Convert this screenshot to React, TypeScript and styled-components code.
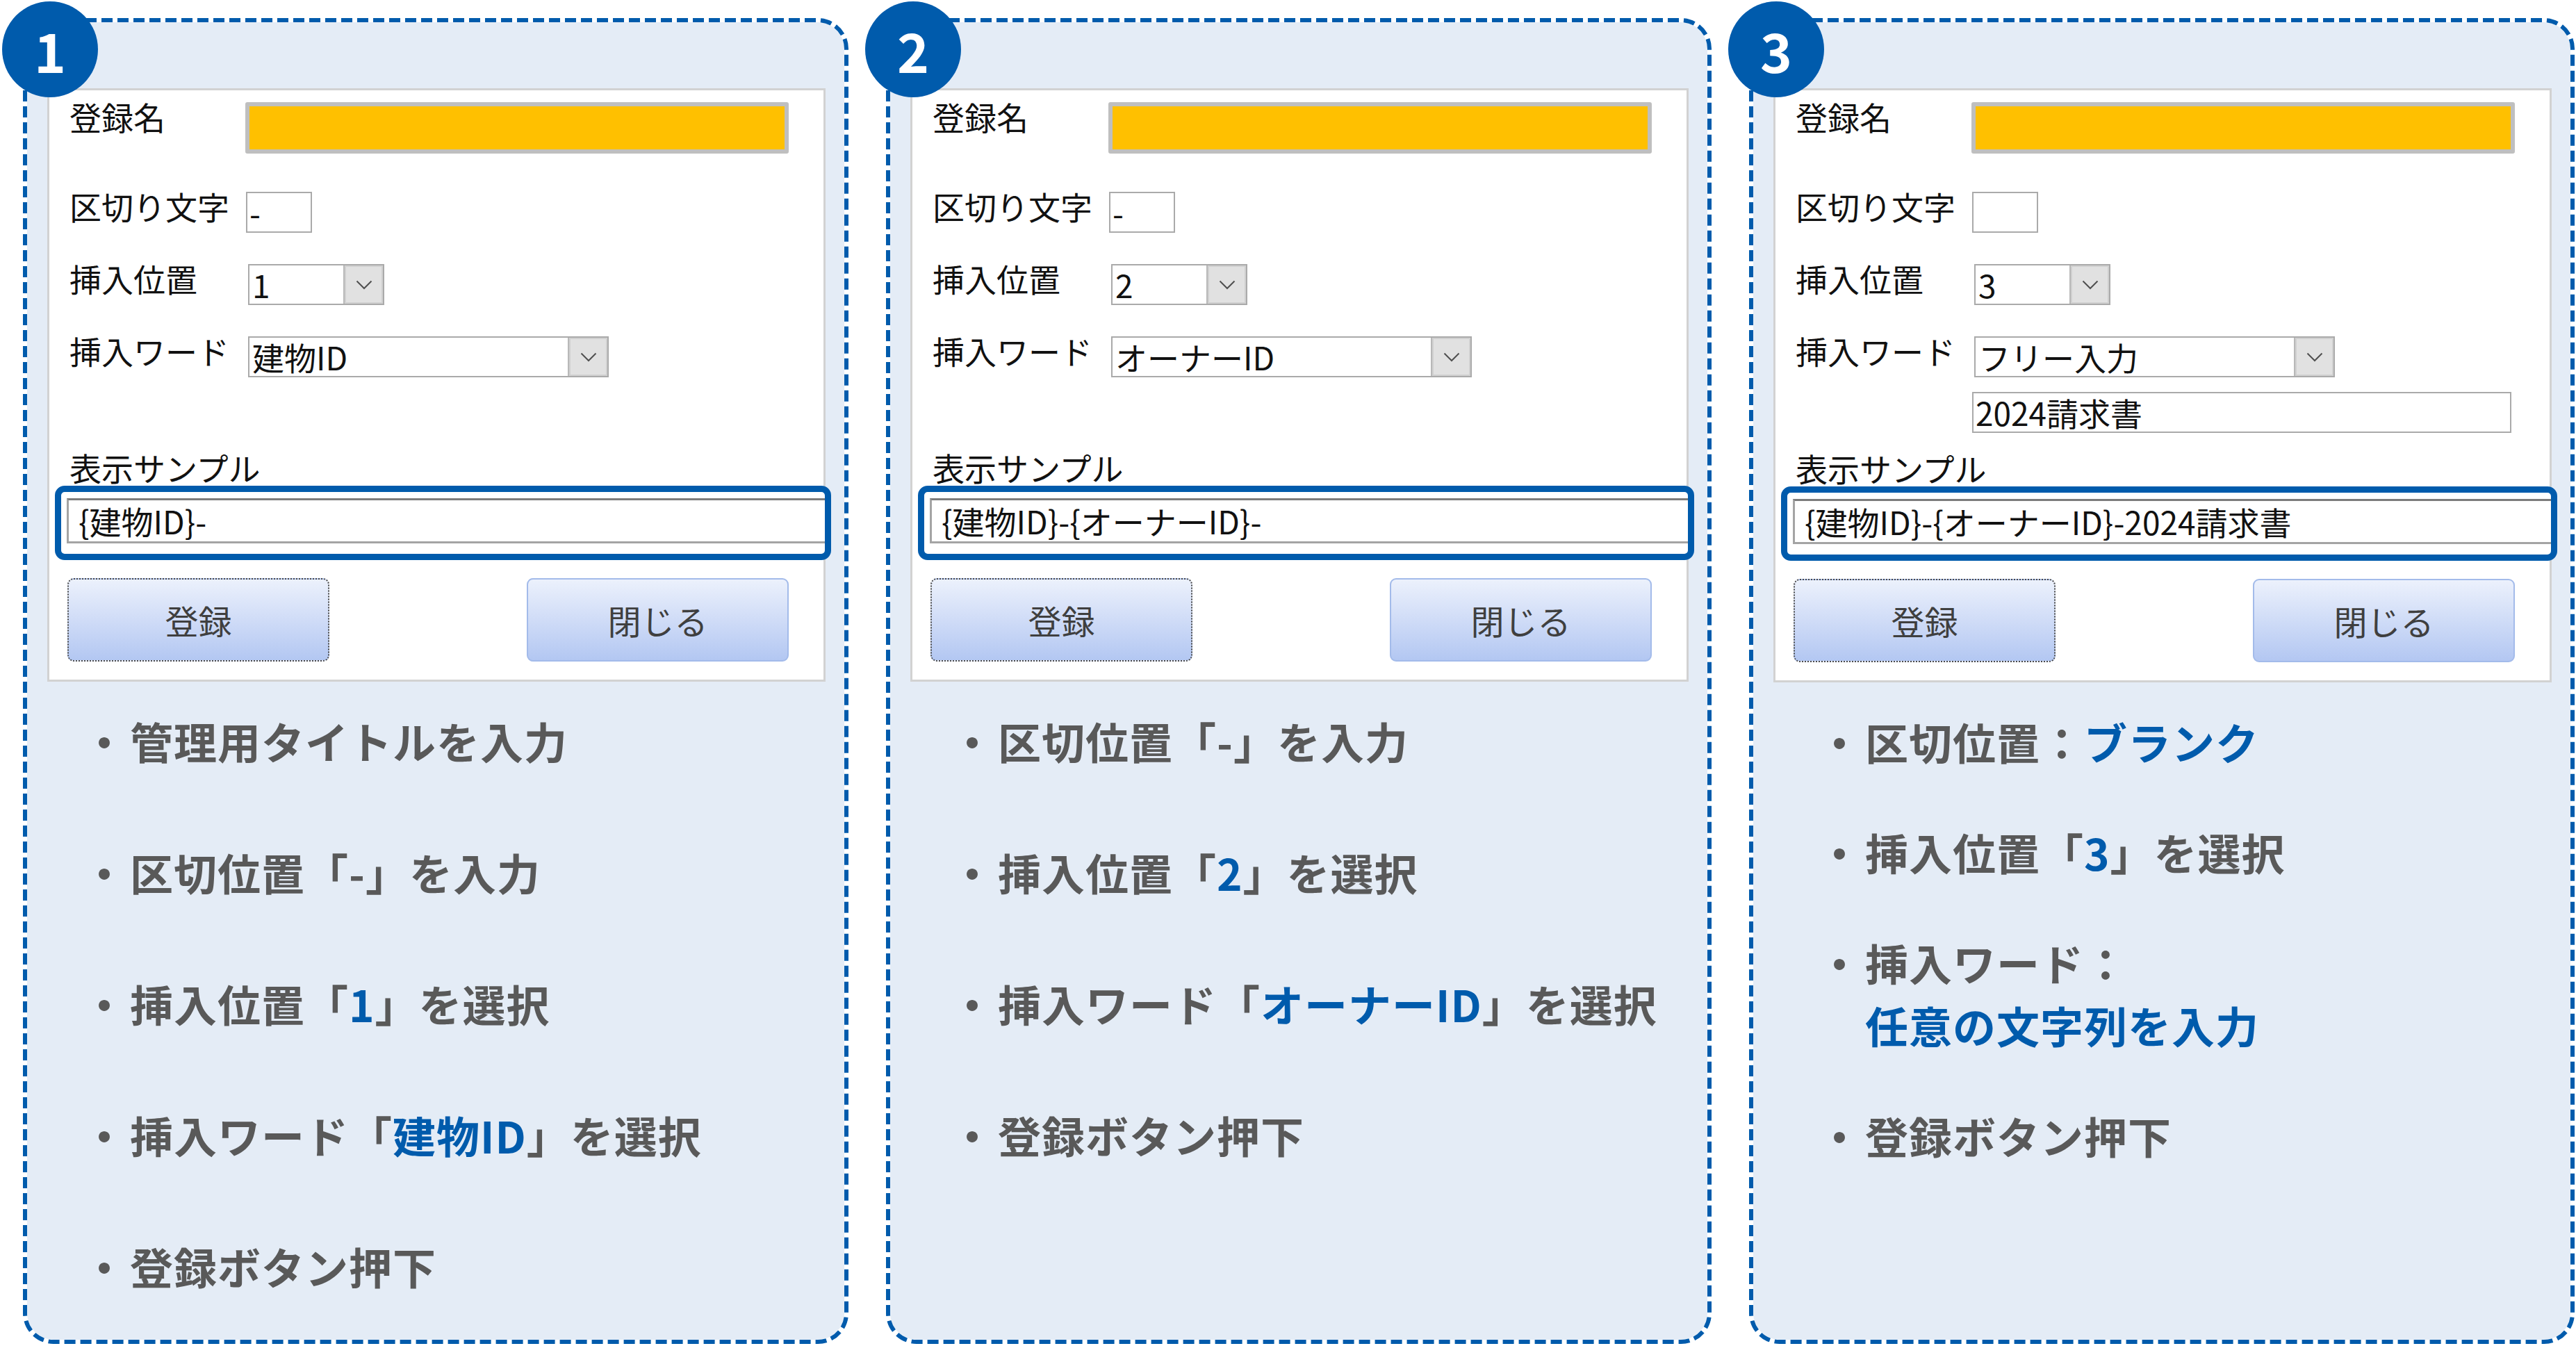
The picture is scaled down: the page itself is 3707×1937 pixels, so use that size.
import React, { ReactNode } from "react";
import styled, { createGlobalStyle } from "styled-components";

const BLUE = "#005bac";
const UI_FONT = `"Noto Sans CJK JP", "Noto Sans", sans-serif`;
const PANEL_W = 1188;
const PANEL_H = 1908;

const GlobalStyle = createGlobalStyle`
  html, body {
    margin: 0;
    padding: 0;
    background: #ffffff;
  }
  body {
    font-family: ${UI_FONT};
  }
`;

const Page = styled.main`
  display: grid;
  grid-template-columns: repeat(3, ${PANEL_W}px);
  column-gap: 54px;
  align-items: start;
  width: 3707px;
  height: 1937px;
  box-sizing: border-box;
  padding: 26px 0 0 33px;
`;

const Panel = styled.section`
  position: relative;
  box-sizing: border-box;
  height: ${PANEL_H}px;
  border: 6px solid transparent;
  border-radius: 44px;
  background: #e4ecf6;
  background-clip: padding-box;
  padding: 95px 27px 0 29px;
`;

// dashed outline drawn over the panel edge (css dashes come out too short)
const Frame = styled.svg`
  position: absolute;
  left: -6px;
  top: -6px;
  pointer-events: none;
`;

const Badge = styled.div`
  position: absolute;
  left: -36px;
  top: -30px;
  width: 138px;
  height: 138px;
  border-radius: 50%;
  background: ${BLUE};
  color: #ffffff;
  display: flex;
  align-items: center;
  justify-content: center;
  font: 700 78px/1 ${UI_FONT};
`;

const Card = styled.div`
  display: flex;
  flex-direction: column;
  background: #ffffff;
  border: 3px solid #d2d2d2;
  padding: 17px 52px 26px 29px;
`;

const FormRow = styled.div<{ $top?: number }>`
  display: grid;
  grid-template-columns: 253px 1fr;
  align-items: start;
  margin-top: ${(p) => p.$top ?? 0}px;
`;

const Label = styled.div`
  margin-top: -3px;
  font-size: 46px;
  line-height: 46px;
  color: #111111;
  white-space: nowrap;
`;

const NameField = styled.div`
  box-sizing: border-box;
  width: 782px;
  height: 74px;
  border: 6px solid #bfbfbf;
  border-radius: 3px;
  background: #ffc000;
`;

const TextBox = styled.div<{ $width: number }>`
  box-sizing: border-box;
  width: ${(p) => p.$width}px;
  height: 59px;
  margin-left: 1px;
  border: 2px solid #aaaaaa;
  background: #ffffff;
  padding-left: 3px;
  font-size: 46px;
  line-height: 55px;
  color: #111111;
  white-space: nowrap;
`;

const Select = styled.div<{ $width: number }>`
  box-sizing: border-box;
  display: flex;
  width: ${(p) => p.$width}px;
  height: 59px;
  margin-left: 4px;
  border: 2px solid #aaaaaa;
  background: #ffffff;
`;

const SelectValue = styled.div`
  flex: 1;
  padding-left: 4px;
  font-size: 46px;
  line-height: 55px;
  color: #111111;
  white-space: nowrap;
`;

const SelectButton = styled.div`
  flex: none;
  width: 55px;
  display: flex;
  align-items: center;
  justify-content: center;
  background: #e1e1e1;
  border-left: 2px solid #b8b8b8;
  box-shadow: inset 0 0 0 2px #d0d0d0;
`;

const WordStack = styled.div`
  display: flex;
  flex-direction: column;
  gap: 21px;
  min-height: 138px;
`;

const SampleLabel = styled(Label)`
  margin-top: 27px;
`;

const Highlight = styled.div`
  margin: 4px -63px 0 -21px;
  border: 9px solid ${BLUE};
  border-radius: 14px;
  padding: 9px 0 15px 8px;
  background: #ffffff;
`;

const SampleField = styled.div`
  box-sizing: border-box;
  height: 65px;
  border: 3px solid #a4a4a4;
  border-top-color: #7c7c7c;
  border-right: none;
  padding-left: 14px;
  font-size: 46px;
  line-height: 59px;
  color: #111111;
  white-space: nowrap;
`;

const ButtonRow = styled.div`
  display: flex;
  justify-content: space-between;
  margin: 26px -2px 0 -3px;
`;

const FormButton = styled.button<{ $focused?: boolean }>`
  box-sizing: border-box;
  width: 377px;
  height: 120px;
  border-radius: 9px;
  border: 2px ${(p) => (p.$focused ? "dotted #4a4a4a" : "solid #a3bbea")};
  background: linear-gradient(#ecf1fc, #b3c7f2);
  font: 400 48px/1 ${UI_FONT};
  color: #3f3f3f;
  padding: 0;
`;

const Steps = styled.ul<{ $indent: number; $gap: number }>`
  list-style: none;
  margin: 47px 0 0 ${(p) => p.$indent}px;
  padding: 0;
  display: flex;
  flex-direction: column;
  gap: ${(p) => p.$gap}px;
`;

const Step = styled.li`
  display: flex;
  font: 700 62px/77px ${UI_FONT};
  letter-spacing: 1px;
  color: #595959;
  white-space: nowrap;
`;

const Dot = styled.span`
  flex: none;
  width: 68px;
`;

const StepText = styled.span`
  display: flex;
  flex-direction: column;
  gap: 13px;
`;

const Hi = styled.span`
  color: ${BLUE};
`;

const Chevron = () => (
  <svg width="24" height="14" viewBox="0 0 24 14">
    <polyline
      points="1.5,1.5 12,12 22.5,1.5"
      fill="none"
      stroke="#4f4f4f"
      strokeWidth="2"
    />
  </svg>
);

type PanelData = {
  no: string;
  separator: string;
  position: string;
  word: string;
  freeText?: string;
  sample: string;
  indent: number;
  gap: number;
  steps: ReactNode[][];
};

const PANELS: PanelData[] = [
  {
    no: "1",
    separator: "-",
    position: "1",
    word: "建物ID",
    sample: "{建物ID}-",
    indent: 51,
    gap: 112,
    steps: [
      ["管理用タイトルを入力"],
      ["区切位置「-」を入力"],
      [
        <>
          挿入位置「<Hi>1</Hi>」を選択
        </>,
      ],
      [
        <>
          挿入ワード「<Hi>建物ID</Hi>」を選択
        </>,
      ],
      ["登録ボタン押下"],
    ],
  },
  {
    no: "2",
    separator: "-",
    position: "2",
    word: "オーナーID",
    sample: "{建物ID}-{オーナーID}-",
    indent: 58,
    gap: 112,
    steps: [
      ["区切位置「-」を入力"],
      [
        <>
          挿入位置「<Hi>2</Hi>」を選択
        </>,
      ],
      [
        <>
          挿入ワード「<Hi>オーナーID</Hi>」を選択
        </>,
      ],
      ["登録ボタン押下"],
    ],
  },
  {
    no: "3",
    separator: "",
    position: "3",
    word: "フリー入力",
    freeText: "2024請求書",
    sample: "{建物ID}-{オーナーID}-2024請求書",
    indent: 64,
    gap: 82,
    steps: [
      [
        <>
          区切位置：<Hi>ブランク</Hi>
        </>,
      ],
      [
        <>
          挿入位置「<Hi>3</Hi>」を選択
        </>,
      ],
      ["挿入ワード：", <Hi>任意の文字列を入力</Hi>],
      ["登録ボタン押下"],
    ],
  },
];

const SettingPanel = ({ data }: { data: PanelData }) => {
  return (
    <Panel>
      <Card>
        <FormRow>
          <Label>登録名</Label>
          <NameField />
        </FormRow>
        <FormRow $top={55}>
          <Label>区切り文字</Label>
          <TextBox $width={95}>{data.separator}</TextBox>
        </FormRow>
        <FormRow $top={45}>
          <Label>挿入位置</Label>
          <Select $width={196}>
            <SelectValue>{data.position}</SelectValue>
            <SelectButton>
              <Chevron />
            </SelectButton>
          </Select>
        </FormRow>
        <FormRow $top={45}>
          <Label>挿入ワード</Label>
          <WordStack>
            <Select $width={519}>
              <SelectValue>{data.word}</SelectValue>
              <SelectButton>
                <Chevron />
              </SelectButton>
            </Select>
            {data.freeText && (
              <TextBox $width={776}>{data.freeText}</TextBox>
            )}
          </WordStack>
        </FormRow>
        <SampleLabel>表示サンプル</SampleLabel>
        <Highlight>
          <SampleField>{data.sample}</SampleField>
        </Highlight>
        <ButtonRow>
          <FormButton $focused>登録</FormButton>
          <FormButton>閉じる</FormButton>
        </ButtonRow>
      </Card>
      <Steps $indent={data.indent} $gap={data.gap}>
        {data.steps.map((lines, inx) => (
          <Step key={data.no + inx}>
            <Dot>・</Dot>
            <StepText>
              {lines.map((line, i) => (
                <span key={i}>{line}</span>
              ))}
            </StepText>
          </Step>
        ))}
      </Steps>
      <Frame width={PANEL_W} height={PANEL_H} viewBox={`0 0 ${PANEL_W} ${PANEL_H}`}>
        <rect
          x="3"
          y="3"
          width={PANEL_W - 6}
          height={PANEL_H - 6}
          rx="41"
          fill="none"
          stroke={BLUE}
          strokeWidth="6"
          strokeDasharray="16 7"
        />
      </Frame>
      <Badge>{data.no}</Badge>
    </Panel>
  );
};

const App = () => {
  return (
    <>
      <GlobalStyle />
      <Page>
        {PANELS.map((panel) => (
          <SettingPanel key={panel.no} data={panel} />
        ))}
      </Page>
    </>
  );
};

export default App;
